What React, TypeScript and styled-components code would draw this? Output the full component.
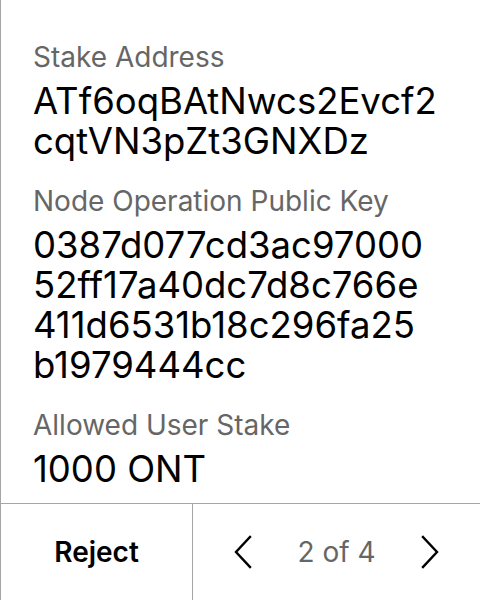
import React from "react";
import styled, { createGlobalStyle } from "styled-components";

const GlobalStyle = createGlobalStyle`
  html, body {
    margin: 0;
    padding: 0;
    background: #fff;
  }
  body {
    font-family: Inter, "Noto Sans", sans-serif;
    color: #000;
  }
`;

const Screen = styled.div`
  width: 480px;
  height: 600px;
  box-sizing: border-box;
  border-left: 1px solid #a6a6a6;
  display: flex;
  flex-direction: column;
`;

const Details = styled.div`
  flex: 1;
  padding: 41px 32px 0 32px;
  display: flex;
  flex-direction: column;
  gap: 24px;
`;

const Field = styled.div`
  display: flex;
  flex-direction: column;
  gap: 8px;
`;

const Label = styled.div`
  font-size: 28px;
  line-height: 32px;
  color: #666;
`;

const Value = styled.div`
  font-size: 36.5px;
  line-height: 40px;
  color: #000;
  white-space: nowrap;
`;

// long keys are shown wrapped the same way the device wraps them
const ValueLine = styled.div``;

const Footer = styled.div`
  height: 96px;
  border-top: 1px solid #a6a6a6;
  display: flex;
`;

const RejectButton = styled.button`
  width: 192px;
  border: none;
  border-right: 1px solid #a6a6a6;
  background: transparent;
  font-family: Inter, "Noto Sans", sans-serif;
  font-size: 28px;
  font-weight: 600;
  color: #000;
  padding: 0;
`;

const Pager = styled.div`
  flex: 1;
  display: flex;
  align-items: center;
  justify-content: space-between;
  padding: 0 41px;
`;

const ArrowButton = styled.button`
  border: none;
  background: transparent;
  padding: 0;
  width: 18px;
  height: 34px;
  display: flex;
  align-items: center;
  justify-content: center;
`;

const PageCount = styled.span`
  font-size: 28px;
  color: #666;
`;

const Chevron: React.FC<{ dir: "left" | "right" }> = ({ dir }) => (
  <svg width="18" height="34" viewBox="0 0 18 34" fill="none">
    <polyline
      points={dir === "left" ? "16,2 2,17 16,32" : "2,2 16,17 2,32"}
      stroke="#000"
      strokeWidth="2.4"
      strokeLinecap="square"
    />
  </svg>
);

const fields = [
  { label: "Stake Address", lines: ["ATf6oqBAtNwcs2Evcf2", "cqtVN3pZt3GNXDz"] },
  {
    label: "Node Operation Public Key",
    lines: ["0387d077cd3ac97000", "52ff17a40dc7d8c766e", "411d6531b18c296fa25", "b1979444cc"],
  },
  { label: "Allowed User Stake", lines: ["1000 ONT"] },
];

export default function App() {
  return (
    <>
      <GlobalStyle />
      <Screen>
        <Details>
          {fields.map((f) => (
            <Field key={f.label}>
              <Label>{f.label}</Label>
              <Value>
                {f.lines.map((line) => (
                  <ValueLine key={line}>{line}</ValueLine>
                ))}
              </Value>
            </Field>
          ))}
        </Details>
        <Footer>
          <RejectButton>Reject</RejectButton>
          <Pager>
            <ArrowButton>
              <Chevron dir="left" />
            </ArrowButton>
            <PageCount>2 of 4</PageCount>
            <ArrowButton>
              <Chevron dir="right" />
            </ArrowButton>
          </Pager>
        </Footer>
      </Screen>
    </>
  );
}
